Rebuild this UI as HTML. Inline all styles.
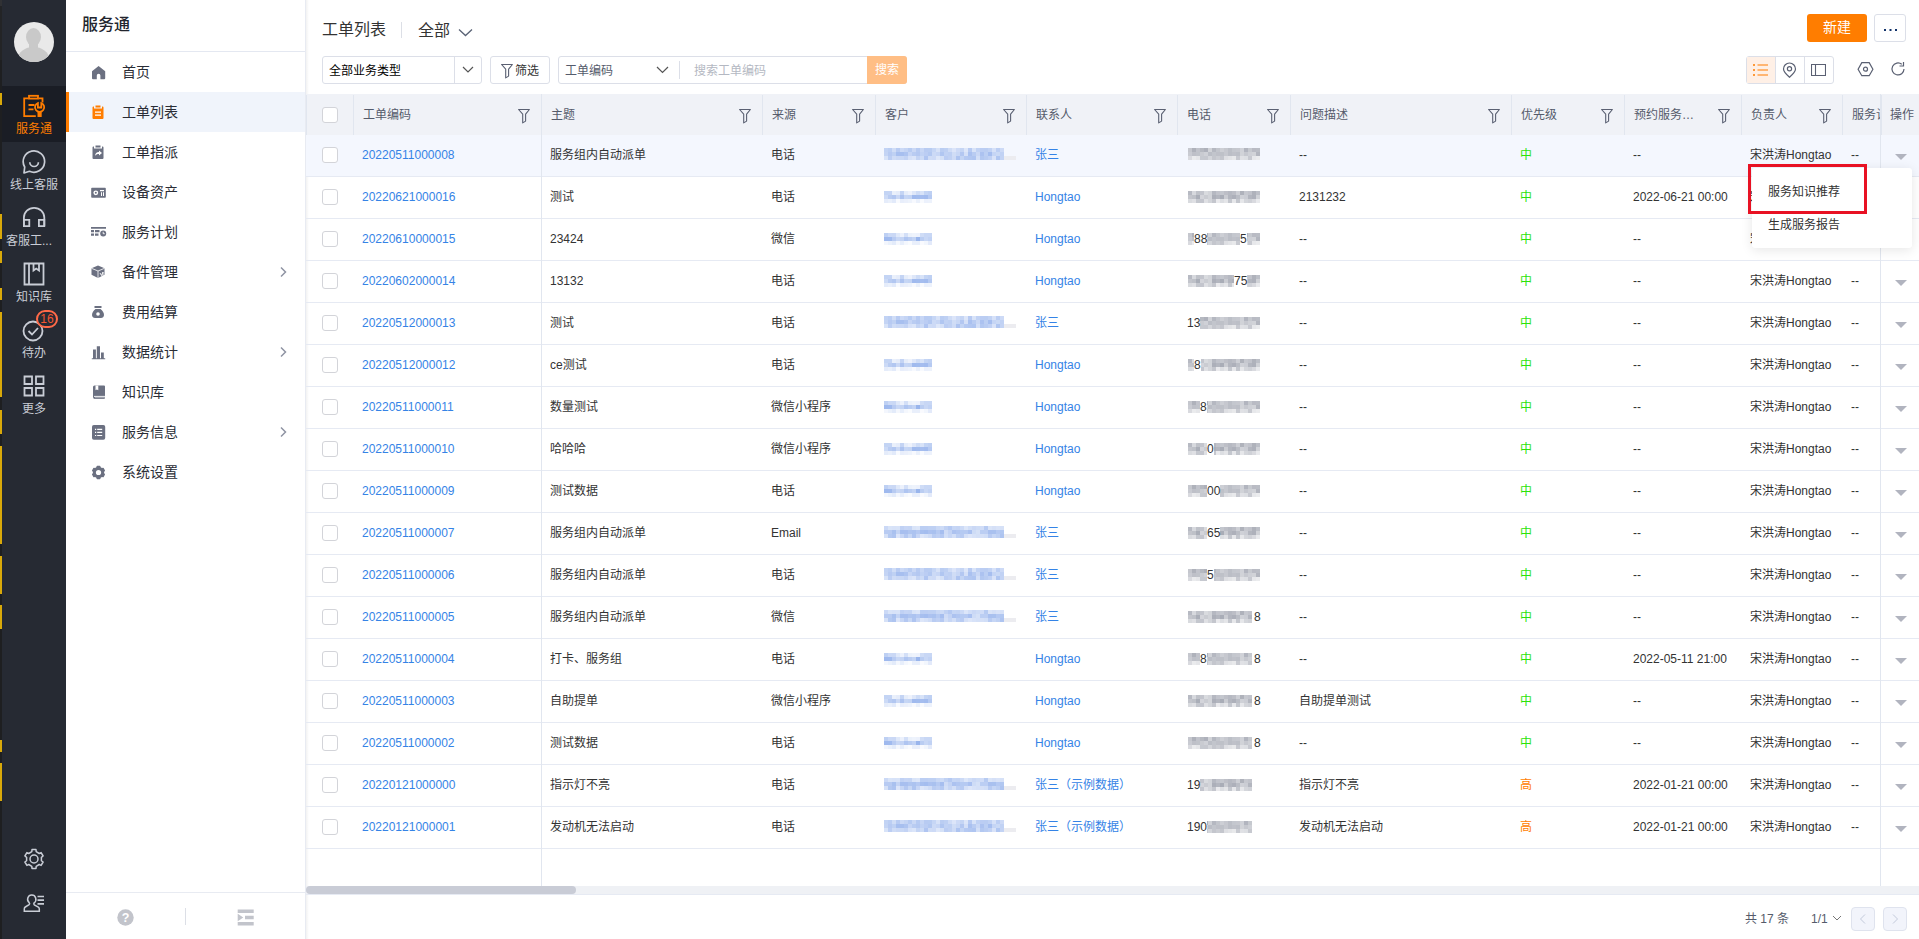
<!DOCTYPE html>
<html lang="zh-CN"><head><meta charset="utf-8"><title>工单列表</title>
<style>
*{box-sizing:border-box;margin:0;padding:0}
html,body{width:1919px;height:939px;overflow:hidden;background:#fff}
body{font-family:"Liberation Sans","Noto Sans CJK SC",sans-serif;font-size:12px;color:#333;position:relative}
.abs{position:absolute}
#strip{left:0;top:0;width:2px;height:939px;background:linear-gradient(180deg,#303134 0 6px,#232426 6px 60px,#1e1f21 60px)}
#strip i{position:absolute;left:0;width:2px;background:#d9a90a;display:block}
#nav{left:2px;top:0;width:64px;height:939px;background:#262a33}
#nav .it{position:absolute;left:0;width:64px;height:56px;text-align:center;color:#c9cdd6;font-size:12px}
#nav .it.on{background:#1a1d25;color:#ff7d00}
#nav .it span{position:absolute;left:0;width:64px;top:35px;line-height:16px;white-space:nowrap}
#nav .it svg{position:absolute;left:19px;top:7px}
#side{left:66px;top:0;width:240px;height:939px;background:#fff;border-right:1px solid #e8ebf2}
#side h1{position:absolute;left:16px;top:13px;font-size:16px;font-weight:500;color:#22252e;line-height:24px}
#side .hr{position:absolute;left:0;top:51px;width:239px;height:1px;background:#e4e8f1}
#side .mi{position:absolute;left:0;width:239px;height:40px;line-height:40px;font-size:14px;color:#2a2d36}
#side .mi.on{background:#f0f4fb;border-left:3px solid #ff7d00}
#side .mi span{position:absolute;left:56px;top:0}
#side .mi.on span{left:53px}
#side .mi svg.ic{position:absolute;left:24px;top:12px}
#side .mi.on svg.ic{left:21px}
#side .mi svg.ar{position:absolute;left:211px;top:14px}
#side .ft{position:absolute;left:0;top:892px;width:239px;height:47px;border-top:1px solid #e8ebf2}
#main{left:306px;top:0;width:1613px;height:939px;background:#fff}
.th{position:absolute;top:95px;height:40px;background:#f0f2f7;border-left:1px solid #e1e6ef;color:#555b6b;line-height:41px;padding-left:9px;white-space:nowrap;overflow:hidden}
.th .fi{position:absolute;right:10px;top:13px}
.row{position:absolute;left:306px;width:1613px;height:42px;border-bottom:1px solid #e6eaf3}
.row.hv{background:#f4f7fe}
.c{position:absolute;top:0;height:41px;line-height:41px;white-space:nowrap;overflow:hidden;color:#333}
a.l,.l{color:#3583e6;text-decoration:none}
.cb{position:absolute;width:16px;height:16px;border:1px solid #d3d4d9;border-radius:3px;background:#fff}
.vl{position:absolute;width:1px;background:#e1e6ef}
.dg{position:absolute;top:14px;height:13px;line-height:13px;background:#fff;color:#333}
.mz{position:absolute;top:13px;height:12px}.mz i{display:block;height:4px;width:100%}
.bL00{background:linear-gradient(90deg,#c2d3f4 0px 4px,#bbcef3 4px 8px,#d0ddf6 8px 12px,#b8cbf2 12px 16px,#cbd9f6 16px 20px,#c4d4f4 20px 24px,#b7cbf2 24px 28px,#cad8f5 28px 32px,#b6caf2 32px 36px,#c7d6f5 36px 40px,#b8cbf2 40px 44px,#b8ccf2 44px 48px,#c6d6f5 48px 52px,#d7e2f8 52px 56px,#bacdf2 56px 60px,#bed0f3 60px 64px,#cfdcf6 64px 68px,#dce5f9 68px 72px,#cddaf6 72px 76px,#c5d5f4 76px 80px,#dde6f9 80px 84px,#b7caf2 84px 88px,#d8e3f8 88px 92px,#c1d2f4 92px 96px,#bbcdf3 96px 100px,#bacdf2 100px 104px,#c1d2f4 104px 108px,#d6e1f8 108px 112px,#bccef3 112px 116px,#cddaf6 116px 120px)}
.bL01{background:linear-gradient(90deg,#c4d4f4 0px 4px,#b7caf2 4px 8px,#bfd1f3 8px 12px,#a7bfef 12px 16px,#a7bfef 16px 20px,#aec4f0 20px 24px,#c6d5f5 24px 28px,#b9ccf2 28px 32px,#b4c8f1 32px 36px,#c1d2f4 36px 40px,#bbcdf3 40px 44px,#b3c8f1 44px 48px,#ccdaf6 48px 52px,#c7d6f5 52px 56px,#b0c6f1 56px 60px,#c1d2f4 60px 64px,#bed0f3 64px 68px,#d0ddf6 68px 72px,#c8d7f5 72px 76px,#b3c7f1 76px 80px,#d5e0f7 80px 84px,#aac1f0 84px 88px,#b9ccf2 88px 92px,#cad8f5 92px 96px,#acc2f0 96px 100px,#bccff3 100px 104px,#a6beef 104px 108px,#c5d5f5 108px 112px,#cad9f5 112px 116px,#c1d2f4 116px 120px)}
.bL02{background:linear-gradient(90deg,#d8e3f8 0px 4px,#bccef3 4px 8px,#cfdcf6 8px 12px,#cad8f5 12px 16px,#c9d8f5 16px 20px,#c3d3f4 20px 24px,#d6e1f8 24px 28px,#dbe5f9 28px 32px,#c4d4f4 32px 36px,#cddbf6 36px 40px,#b0c5f1 40px 44px,#cfdcf6 44px 48px,#cddaf6 48px 52px,#dee7f9 52px 56px,#d5e1f7 56px 60px,#bbcdf3 60px 64px,#c0d1f3 64px 68px,#cedbf6 68px 72px,#aec4f0 72px 76px,#c3d4f4 76px 80px,#b5c9f2 80px 84px,#b2c7f1 84px 88px,#afc5f1 88px 92px,#d3dff7 92px 96px,#b3c8f1 96px 100px,#b9ccf2 100px 104px,#c0d1f4 104px 108px,#d8e2f8 108px 112px,#b0c6f1 112px 116px,#c3d3f4 116px 120px)}
.bL10{background:linear-gradient(90deg,#cbd9f6 0px 4px,#d9e4f8 4px 8px,#d7e2f8 8px 12px,#d8e3f8 12px 16px,#c0d1f4 16px 20px,#c6d5f5 20px 24px,#c4d4f4 24px 28px,#d9e4f8 28px 32px,#dce6f9 32px 36px,#bbcef3 36px 40px,#bccef3 40px 44px,#bed0f3 44px 48px,#bed0f3 48px 52px,#c9d8f5 52px 56px,#cddbf6 56px 60px,#c0d1f3 60px 64px,#b5c9f2 64px 68px,#c6d6f5 68px 72px,#c4d4f4 72px 76px,#ccdaf6 76px 80px,#dce6f9 80px 84px,#d1def7 84px 88px,#cad8f5 88px 92px,#cedcf6 92px 96px,#d1ddf7 96px 100px,#b7cbf2 100px 104px,#dae4f8 104px 108px,#d5e0f7 108px 112px,#d9e3f8 112px 116px,#d6e1f7 116px 120px)}
.bL11{background:linear-gradient(90deg,#b8cbf2 0px 4px,#b8cbf2 4px 8px,#a9c1ef 8px 12px,#c4d4f4 12px 16px,#a7bfef 16px 20px,#a8bfef 20px 24px,#afc5f0 24px 28px,#acc3f0 28px 32px,#b5c9f2 32px 36px,#a7bfef 36px 40px,#a4bdef 40px 44px,#acc2f0 44px 48px,#a9c1ef 48px 52px,#b6caf2 52px 56px,#a6beef 56px 60px,#d0dcf6 60px 64px,#c3d3f4 64px 68px,#acc2f0 68px 72px,#b1c6f1 72px 76px,#b5caf2 76px 80px,#b6caf2 80px 84px,#aac1f0 84px 88px,#cedcf6 88px 92px,#d5e1f7 92px 96px,#bbcef3 96px 100px,#bccef3 100px 104px,#a9c0ef 104px 108px,#a9c1ef 108px 112px,#b5c9f2 112px 116px,#b1c7f1 116px 120px)}
.bL12{background:linear-gradient(90deg,#d6e1f7 0px 4px,#b4c9f1 4px 8px,#aec4f0 8px 12px,#dce5f9 12px 16px,#c7d6f5 16px 20px,#b4c8f1 20px 24px,#c7d7f5 24px 28px,#aec4f0 28px 32px,#c7d6f5 32px 36px,#dde6f9 36px 40px,#d7e2f8 40px 44px,#cfdcf6 44px 48px,#b9ccf2 48px 52px,#bfd0f3 52px 56px,#b5c9f2 56px 60px,#d3dff7 60px 64px,#c7d6f5 64px 68px,#d3dff7 68px 72px,#bdcff3 72px 76px,#b8cbf2 76px 80px,#d5e0f7 80px 84px,#dde6f9 84px 88px,#d7e2f8 88px 92px,#d4e0f7 92px 96px,#d5e0f7 96px 100px,#d1def7 100px 104px,#b8cbf2 104px 108px,#c6d6f5 108px 112px,#bed0f3 112px 116px,#aec4f0 116px 120px)}
.bS00{background:linear-gradient(90deg,#bed0f3 0px 4px,#cbd9f6 4px 8px,#cad8f5 8px 12px,#dfe8f9 12px 16px,#ecf1fc 16px 20px,#d3dff7 20px 24px,#ebf1fb 24px 28px,#eef3fc 28px 32px,#ecf1fc 32px 36px,#cfdcf6 36px 40px,#c8d7f5 40px 44px,#c8d7f5 44px 48px)}
.bS01{background:linear-gradient(90deg,#9fb9ee 0px 4px,#a0baee 4px 8px,#b8cbf2 8px 12px,#c8d7f5 12px 16px,#c4d4f4 16px 20px,#afc5f1 20px 24px,#b9ccf2 24px 28px,#c2d3f4 28px 32px,#99b5ec 32px 36px,#bacdf2 36px 40px,#c8d7f5 40px 44px,#c1d2f4 44px 48px)}
.bS02{background:linear-gradient(90deg,#f3f6fd 0px 4px,#ebf1fb 4px 8px,#e3ebfa 8px 12px,#f4f7fd 12px 16px,#e7eefb 16px 20px,#f4f7fd 20px 24px,#f9fbfe 24px 28px,#e9effb 28px 32px,#e9effb 32px 36px,#f9fafe 36px 40px,#f2f6fd 40px 44px,#e3eafa 44px 48px)}
.bS10{background:linear-gradient(90deg,#c3d4f4 0px 4px,#c4d4f4 4px 8px,#eaf0fb 8px 12px,#e5ecfa 12px 16px,#c4d4f4 16px 20px,#e6edfa 20px 24px,#eef2fc 24px 28px,#dee7f9 28px 32px,#cedcf6 32px 36px,#d8e3f8 36px 40px,#c3d4f4 40px 44px,#bed0f3 44px 48px)}
.bS11{background:linear-gradient(90deg,#ccdaf6 0px 4px,#b9ccf2 4px 8px,#b2c7f1 8px 12px,#cad8f5 12px 16px,#adc3f0 16px 20px,#c6d6f5 20px 24px,#c3d4f4 24px 28px,#a0baee 28px 32px,#a2bcee 32px 36px,#a5bdef 36px 40px,#a2bbee 40px 44px,#b6caf2 44px 48px)}
.bS12{background:linear-gradient(90deg,#e5ecfa 0px 4px,#eaf0fb 4px 8px,#e2eafa 8px 12px,#f8fafe 12px 16px,#e8eefb 16px 20px,#ebf0fb 20px 24px,#eef3fc 24px 28px,#f7f9fe 28px 32px,#eaf0fb 32px 36px,#f8fafe 36px 40px,#ecf1fc 40px 44px,#edf2fc 44px 48px)}
.bG00{background:linear-gradient(90deg,#c5c7ce 0px 4px,#afb2bb 4px 8px,#c1c3cb 8px 12px,#b6b9c1 12px 16px,#aeb1bb 16px 20px,#d1d3d8 20px 24px,#b5b8c1 24px 28px,#c2c5cc 28px 32px,#cdcfd5 32px 36px,#c6c8cf 36px 40px,#bcbfc7 40px 44px,#c4c7ce 44px 48px,#c6c8cf 48px 52px,#d0d2d8 52px 56px,#b2b5bf 56px 60px,#c6c9cf 60px 64px,#b9bbc4 64px 68px,#babdc5 68px 72px)}
.bG01{background:linear-gradient(90deg,#c9cbd2 0px 4px,#bec0c8 4px 8px,#c0c3ca 8px 12px,#c9cbd1 12px 16px,#cfd1d7 16px 20px,#bbbec6 20px 24px,#c2c5cc 24px 28px,#bec0c8 28px 32px,#bec1c8 32px 36px,#c6c8cf 36px 40px,#bbbec6 40px 44px,#bfc1c9 44px 48px,#bcbfc7 48px 52px,#d1d3d8 52px 56px,#c6c8cf 56px 60px,#ced0d6 60px 64px,#d1d3d8 64px 68px,#b3b6bf 68px 72px)}
.bG02{background:linear-gradient(90deg,#d9dadf 0px 4px,#eaebed 4px 8px,#e5e6e9 8px 12px,#c6c9d0 12px 16px,#c6c8cf 16px 20px,#d4d6db 20px 24px,#c4c6cd 24px 28px,#cbcdd3 28px 32px,#c4c6cd 32px 36px,#dedfe3 36px 40px,#e3e4e7 40px 44px,#e8e9eb 44px 48px,#c7c9d0 48px 52px,#e0e1e5 52px 56px,#dddfe3 56px 60px,#c7c9d0 60px 64px,#e7e8eb 64px 68px,#ebecee 68px 72px)}
.bG10{background:linear-gradient(90deg,#b7bac3 0px 4px,#d7d9de 4px 8px,#bfc2c9 8px 12px,#c3c5cd 12px 16px,#d9dbdf 16px 20px,#d2d4d9 20px 24px,#b5b8c1 24px 28px,#c1c3cb 28px 32px,#c4c7ce 32px 36px,#bdbfc7 36px 40px,#b6b9c2 40px 44px,#bcbec6 44px 48px,#cdcfd5 48px 52px,#afb2bb 52px 56px,#c6c8cf 56px 60px,#c1c3cb 60px 64px,#afb2bb 64px 68px,#bcbfc7 68px 72px)}
.bG11{background:linear-gradient(90deg,#c3c5cc 0px 4px,#bec1c8 4px 8px,#aaaeb8 8px 12px,#d3d4da 12px 16px,#caccd2 16px 20px,#d2d4d9 20px 24px,#acafb9 24px 28px,#b3b6bf 28px 32px,#a9adb7 32px 36px,#caccd2 36px 40px,#b3b6bf 40px 44px,#adb0ba 44px 48px,#babdc5 48px 52px,#cfd1d7 52px 56px,#cbcdd4 56px 60px,#b3b6bf 60px 64px,#aeb1bb 64px 68px,#d0d2d7 68px 72px)}
.bG12{background:linear-gradient(90deg,#d9dbdf 0px 4px,#dfe0e4 4px 8px,#c4c7ce 8px 12px,#c3c5cd 12px 16px,#dfe0e4 16px 20px,#d3d5da 20px 24px,#c4c6cd 24px 28px,#eaeaed 28px 32px,#dcdee2 32px 36px,#e4e5e8 36px 40px,#c4c7ce 40px 44px,#e6e7ea 44px 48px,#c3c6cd 48px 52px,#e6e7ea 52px 56px,#d4d6db 56px 60px,#cfd1d7 60px 64px,#d9dadf 64px 68px,#e9eaed 68px 72px)}
.tri{position:absolute;left:1589px;top:19px;width:0;height:0;border-left:6px solid transparent;border-right:6px solid transparent;border-top:6px solid #b1b4bf}
</style></head><body>

<div id="strip" class="abs">
<i style="top:93px;height:12px"></i>
<i style="top:214px;height:25px"></i>
<i style="top:251px;height:12px"></i>
<i style="top:288px;height:12px"></i>
<i style="top:312px;height:85px"></i>
<i style="top:410px;height:24px"></i>
<i style="top:446px;height:98px"></i>
<i style="top:556px;height:38px"></i>
<i style="top:605px;height:24px"></i>
<i style="top:740px;height:12px"></i>
<i style="top:763px;height:38px"></i>
</div>
<div id="nav" class="abs">
<div class="abs" style="left:12px;top:22px;width:40px;height:40px;border-radius:50%;background:#e9e9e9;overflow:hidden"><div class="abs" style="left:12px;top:6px;width:15px;height:18px;border-radius:50%;background:#c9c9c9"></div><div class="abs" style="left:15px;top:20px;width:9px;height:8px;background:#c9c9c9"></div><div class="abs" style="left:4px;top:25px;width:31px;height:26px;border-radius:50% 50% 0 0/45% 45% 0 0;background:#c9c9c9"></div></div>
<div class="it on" style="top:86px"><svg width="26" height="26" viewBox="0 0 26 26" fill="none" stroke="#ff7d00" stroke-width="1.800"><path d="M7.300 5.300H3.200V23.100H14.800M17.800 5.300h3.700V9.500"/><rect x="8" y="2.800" width="9" height="2.800"/><path d="M7.500 12h6M7.500 16.300h5"/><path d="M16.900 10a4.600 4.600 0 1 0 3.400 0v4.500h-3.400z"/><path d="M18.600 19V24" stroke-width="4.200"/></svg><span>服务通</span></div>
<div class="it" style="top:142px"><svg width="26" height="26" viewBox="0 0 26 26" fill="none" stroke="#c9cdd6" stroke-width="1.700"><path d="M8.500 22.300A10.700 10.700 0 1 0 3.700 18L3 24z" stroke-linejoin="round"/><path d="M8.800 13.200a4.300 4.300 0 0 0 8.600 0"/></svg><span>线上客服</span></div>
<div class="it" style="top:198px"><svg width="26" height="26" viewBox="0 0 26 26" fill="none" stroke="#c9cdd6" stroke-width="1.800"><path d="M2.900 21V12.500a10.200 9.700 0 0 1 20.400 0V21"/><path d="M2.900 14.800h5.400v6.300H2.900zM17.900 14.800h5.400v6.300h-5.400z"/></svg><span style="text-align:left;left:4px">客服工...</span></div>
<div class="it" style="top:254px"><svg width="26" height="26" viewBox="0 0 26 26" fill="none" stroke="#c9cdd6" stroke-width="1.8"><path d="M3.500 2.500h19v21h-19z"/><path d="M8 2.500v21M12.500 2.500v7l2.700-2 2.800 2v-7"/></svg><span>知识库</span></div>
<div class="it" style="top:310px"><svg width="26" height="26" viewBox="0 0 26 26" fill="none" stroke="#c9cdd6" stroke-width="1.8"><circle cx="12" cy="14" r="9.500"/><path d="M7.500 14l3.500 3.500 6-6.500"/></svg><span>待办</span></div>
<div class="it" style="top:366px"><svg width="26" height="26" viewBox="0 0 26 26" fill="none" stroke="#c9cdd6" stroke-width="1.8"><path d="M3.500 3.500h7.500v7.500H3.500zM15 3.500h7.500v7.500H15zM3.500 15h7.500v7.500H3.500zM15 15h7.500v7.500H15z"/></svg><span>更多</span></div>
<div class="abs" style="left:34px;top:310px;width:22px;height:18px;border-radius:9px;background:#262a33;border:2px solid #ff6a48;color:#f4562f;font-size:12px;line-height:14px;text-align:center">16</div>
<svg class="abs" style="left:21px;top:848px" width="22" height="22" viewBox="0 0 22 22" fill="none" stroke="#c9cdd6" stroke-width="1.500" stroke-linejoin="round"><circle cx="11" cy="11" r="4"/><path d="M8.8 3.7L9.0 1.6L13.0 1.6L13.2 3.7L16.2 5.5L18.1 4.6L20.1 8.0L18.4 9.3L18.4 12.7L20.1 14.0L18.1 17.4L16.2 16.5L13.2 18.3L13.0 20.4L9.0 20.4L8.8 18.3L5.8 16.5L3.9 17.4L1.9 14.0L3.6 12.7L3.6 9.3L1.9 8.0L3.9 4.6L5.8 5.5z"/></svg>
<svg class="abs" style="left:21px;top:893px" width="22" height="22" viewBox="0 0 22 22" fill="none" stroke="#c9cdd6" stroke-width="1.500"><path d="M8.800 2a4 4.300 0 0 1 2.400 7.800c-.5.600-.5 1.500.1 2l4 2.300c.8.500 1 1 1 2v2.200H1.300V16c0-1 .2-1.500 1-2l3.800-2.300c.6-.5.600-1.400.1-2A4 4.300 0 0 1 8.800 2z"/><path d="M14.500 3.500H21M14.500 7.200H21M14.500 10.800H21" stroke-width="1.700"/></svg>
</div>
<div id="side" class="abs"><h1>服务通</h1><div class="hr"></div>
<div class="mi" style="top:52px"><svg class="ic" width="16" height="16" viewBox="0 0 16 16" style="overflow:visible"><path d="M8.600 1.900L15.200 7.200V14.200a1 1 0 0 1-1 1H10.400V11.600a1.800 1.800 0 0 0-3.600 0V15.200H3a1 1 0 0 1-1-1V7.200z" fill="#6b7081"/></svg><span>首页</span></div>
<div class="mi on" style="top:92px"><svg class="ic" width="16" height="16" viewBox="0 0 16 16" style="overflow:visible"><path d="M5.500 1.500h5v2h-5z M4 2.500h-.5a1 1 0 0 0-1 1V14a1 1 0 0 0 1 1h9a1 1 0 0 0 1-1V3.500a1 1 0 0 0-1-1H12v2H4z" fill="#ff7d00"/><path d="M5 7.500h6v1.200H5zM5 10.500h6v1.200H5z" fill="#fff"/></svg><span>工单列表</span></div>
<div class="mi" style="top:132px"><svg class="ic" width="16" height="16" viewBox="0 0 16 16" style="overflow:visible"><path d="M5.500 1.500h5v2h-5z M4 2.500h-.5a1 1 0 0 0-1 1V14a1 1 0 0 0 1 1h9a1 1 0 0 0 1-1V3.500a1 1 0 0 0-1-1H12v2H4z" fill="#6b7081"/><path d="M9 6.500l3 2.500-3 2.500V10c-2 0-3 .5-4 2 .3-2.500 1.500-4 4-4z" fill="#fff"/></svg><span>工单指派</span></div>
<div class="mi" style="top:172px"><svg class="ic" width="16" height="16" viewBox="0 0 16 16" style="overflow:visible"><path d="M2 3.800h13a.8.800 0 0 1 .8.800v8.400a.8.800 0 0 1-.8.800H2a.8.800 0 0 1-.8-.8V4.600a.8.800 0 0 1 .8-.8z" fill="#6b7081"/><circle cx="5.800" cy="8.800" r="2.400" fill="#fff"/><circle cx="5.800" cy="8.800" r="1" fill="#6b7081"/><path d="M10 6h4v1.200h-4zM11 8.200h1v3.800h-1zM13 8.200h1v3.800h-1z" fill="#fff"/></svg><span>设备资产</span></div>
<div class="mi" style="top:212px"><svg class="ic" width="16" height="16" viewBox="0 0 16 16" style="overflow:visible"><path d="M1 3h15v1.800H1zM1 6h3v2.200H1zM5 6h4.500v2.200H5zM1 9.500h3v2.200H1zM5 9.500h3.500v2.200H5z" fill="#6b7081"/><circle cx="13.200" cy="9.500" r="3" fill="#6b7081"/><path d="M13.200 7.800v1.900h1.500" stroke="#fff" stroke-width=".9" fill="none"/></svg><span>服务计划</span></div>
<div class="mi" style="top:252px"><svg class="ic" width="16" height="16" viewBox="0 0 16 16" style="overflow:visible"><path d="M8 1.500l6.500 2.800v6.500L8 14 1.500 10.800V4.300z" fill="#6b7081"/><path d="M8 7v7M1.500 4.300L8 7l6.500-2.700" stroke="#fff" stroke-width=".8" fill="none"/><path d="M10 9l1.500 2.500L13 8v4" stroke="#fff" stroke-width=".9" fill="none"/></svg><span>备件管理</span><svg class="ar" width="12" height="12" viewBox="0 0 12 12"><path d="M4 1.500L8.500 6 4 10.500" fill="none" stroke="#8f94a3" stroke-width="1.500"/></svg></div>
<div class="mi" style="top:292px"><svg class="ic" width="16" height="16" viewBox="0 0 16 16" style="overflow:visible"><path d="M4.500 2h7v2h-7zM5.500 5h5c2 1.500 3.500 3.800 3.500 6 0 2-1.500 3-3 3H5c-1.500 0-3-1-3-3 0-2.200 1.500-4.500 3.500-6z" fill="#6b7081"/><circle cx="8" cy="10" r="1.800" fill="#fff"/></svg><span>费用结算</span></div>
<div class="mi" style="top:332px"><svg class="ic" width="16" height="16" viewBox="0 0 16 16" style="overflow:visible"><path d="M3 5.400h2.900v8.800H3zM6.800 2.200H10v12H6.800zM11 8.600h2.800v5.600H11zM1.800 14.200h13.400v1H1.800z" fill="#6b7081"/></svg><span>数据统计</span><svg class="ar" width="12" height="12" viewBox="0 0 12 12"><path d="M4 1.500L8.500 6 4 10.500" fill="none" stroke="#8f94a3" stroke-width="1.500"/></svg></div>
<div class="mi" style="top:372px"><svg class="ic" width="16" height="16" viewBox="0 0 16 16" style="overflow:visible"><path d="M4.500 1.500H14a1 1 0 0 1 1 1V14a1 1 0 0 1-1 1H5a2 2 0 0 1-2-2V3a1.500 1.500 0 0 1 1.500-1.500z" fill="#6b7081"/><path d="M5.500 1.500h2.800v4.800L6.900 5.400 5.500 6.300z" fill="#fff"/><path d="M4 12.400h11" stroke="#fff" stroke-width=".9"/><path d="M5 13.800h10" stroke="#fff" stroke-width=".5"/></svg><span>知识库</span></div>
<div class="mi" style="top:412px"><svg class="ic" width="16" height="16" viewBox="0 0 16 16" style="overflow:visible"><rect x="2" y="1" width="13.200" height="14.800" rx="1.800" fill="#6b7081"/><path d="M5 4.700h1.200v1.200H5zM7.200 4.700h5v1.200h-5zM5 7.800h1.200V9H5zM7.200 7.800h5V9h-5zM5 10.900h1.200v1.200H5zM7.200 10.900h5v1.200h-5z" fill="#fff"/></svg><span>服务信息</span><svg class="ar" width="12" height="12" viewBox="0 0 12 12"><path d="M4 1.500L8.500 6 4 10.500" fill="none" stroke="#8f94a3" stroke-width="1.500"/></svg></div>
<div class="mi" style="top:452px"><svg class="ic" width="16" height="16" viewBox="0 0 16 16" style="overflow:visible"><path d="M7.0 3.8L7.3 2.6L9.7 2.6L10.0 3.8L11.8 4.9L13.0 4.5L14.2 6.6L13.3 7.5L13.3 9.5L14.2 10.4L13.0 12.5L11.8 12.1L10.0 13.2L9.7 14.4L7.3 14.4L7.0 13.2L5.2 12.1L4.0 12.5L2.8 10.4L3.7 9.5L3.7 7.5L2.8 6.6L4.0 4.5L5.2 4.9z" fill="#6b7081" stroke="#6b7081" stroke-width="1.600" stroke-linejoin="round"/><circle cx="8.500" cy="8.500" r="2.600" fill="#fff"/></svg><span>系统设置</span></div>
<div class="ft"><svg class="abs" style="left:51px;top:16px" width="17" height="17" viewBox="0 0 17 17"><circle cx="8.500" cy="8.500" r="8.200" fill="#c2c4cb"/><text x="8.500" y="13" text-anchor="middle" font-size="12.500" font-weight="bold" fill="#fff" font-family="Liberation Sans,sans-serif">?</text></svg><div class="abs" style="left:119px;top:15px;width:1px;height:17px;background:#dcdfe6"></div><svg class="abs" style="left:171px;top:16px" width="17" height="17" viewBox="0 0 17 17" fill="#c2c4cb"><path d="M.7.500h16v3.400H.700zM8 6.800h8.700v3.400H8zM.700 13.100h16v3.400H.700zM.700 4.800l5.600 3.700-5.600 3.700z"/></svg></div>
</div>
<div id="main" class="abs"></div>
<div class="abs" style="left:306px;top:0;width:3px;height:939px;background:linear-gradient(90deg,rgba(0,0,0,.05),rgba(0,0,0,0))"></div>
<div class="abs" style="left:322px;top:18px;font-size:16px;line-height:24px;color:#333">工单列表</div>
<div class="abs" style="left:401px;top:22px;width:1px;height:16px;background:#dcdfe6"></div>
<div class="abs" style="left:418px;top:19px;font-size:16px;line-height:24px;color:#333">全部</div>
<svg class="abs" style="left:458px;top:28px" width="15" height="10" viewBox="0 0 15 10"><path d="M1 1.500l6.500 6L14 1.500" fill="none" stroke="#596275" stroke-width="1.300"/></svg>
<div class="abs" style="left:1807px;top:14px;width:60px;height:28px;border-radius:3px;background:#ff7d00;color:#fff;font-size:14px;line-height:27px;text-align:center">新建</div>
<div class="abs" style="left:1874px;top:14px;width:32px;height:28px;border-radius:3px;border:1px solid #dcdfe8;background:#fff"><svg class="abs" style="left:8px;top:13px" width="16" height="4" viewBox="0 0 16 4" fill="#12336b"><rect x="1" y="1" width="2" height="2"/><rect x="6.500" y="1" width="2" height="2"/><rect x="12" y="1" width="2" height="2"/></svg></div>
<div class="abs" style="left:322px;top:56px;width:160px;height:28px;border:1px solid #dcdfe8;border-radius:3px;line-height:28px;padding-left:6px;color:#000">全部业务类型<div class="abs" style="left:131px;top:0;width:1px;height:26px;background:#dcdfe8"></div><svg class="abs" style="left:139px;top:9px" width="12" height="8" viewBox="0 0 12 8"><path d="M1 1l5 5 5-5" fill="none" stroke="#555" stroke-width="1.200"/></svg></div>
<div class="abs" style="left:490px;top:56px;width:60px;height:28px;border:1px solid #dcdfe8;border-radius:3px;line-height:28px;color:#333;padding-left:24px">筛选<svg class="abs" style="left:9px;top:6px" width="14" height="16" viewBox="0 0 14 16"><path d="M1.600 1.500h10.800L8.600 6.200v6.900L5.700 14.900V6.200z" fill="none" stroke="#5a6072" stroke-width="1.100" stroke-linejoin="round"/></svg></div>
<div class="abs" style="left:558px;top:56px;width:349px;height:28px;border:1px solid #dcdfe8;border-radius:3px;line-height:28px;color:#555b6b;padding-left:6px">工单编码<svg class="abs" style="left:97px;top:9px" width="13" height="8" viewBox="0 0 13 8"><path d="M1 1l5.500 5.500L12 1" fill="none" stroke="#555" stroke-width="1.200"/></svg><div class="abs" style="left:120px;top:4px;width:1px;height:18px;background:#dcdfe8"></div><span class="abs" style="left:135px;top:0;color:#b4b8c2">搜索工单编码</span><div class="abs" style="left:308px;top:-1px;width:40px;height:28px;background:#ffbe85;color:#fff;text-align:center;border-radius:0 3px 3px 0">搜索</div></div>
<div class="abs" style="left:1746px;top:56px;width:88px;height:28px;border:1px solid #dcdfe8;border-radius:3px;background:#fff"><div class="abs" style="left:0;top:0;width:29px;height:26px;background:#fff0e6;border-right:1px solid #dcdfe8"></div><div class="abs" style="left:57px;top:0;width:1px;height:26px;background:#dcdfe8"></div><svg class="abs" style="left:5px;top:5px" width="17" height="16" viewBox="0 0 17 16"><path d="M1 3h2M1 8h2M1 13h2" stroke="#ff7d00" stroke-width="1.500"/><path d="M5.500 3H16M5.500 8H16M5.500 13H16" stroke="#ff7d00" stroke-width="1.100"/></svg><svg class="abs" style="left:35px;top:5px" width="15" height="17" viewBox="0 0 15 17" fill="none" stroke="#5a6072" stroke-width="1.200"><path d="M7.500 1a6 6 0 0 1 6 6c0 2.800-3 5.600-6 8.200-3-2.600-6-5.400-6-8.200a6 6 0 0 1 6-6z"/><circle cx="7.500" cy="6.800" r="2.100"/></svg><svg class="abs" style="left:64px;top:7px" width="15" height="13" viewBox="0 0 15 13" fill="none" stroke="#5a6072" stroke-width="1.200"><path d="M.5.500h14v11H.500zM4.500.500v11" stroke-width="1.100"/></svg></div>
<svg class="abs" style="left:1857px;top:61px" width="17" height="17" viewBox="0 0 17 17" fill="none" stroke="#5a6072" stroke-width="1.200"><path d="M4.800 1.700h7.400l3.700 6.500-3.700 6.500H4.800L1.100 8.200z"/><circle cx="8.500" cy="8.200" r="2"/></svg>
<svg class="abs" style="left:1890px;top:61px" width="16" height="16" viewBox="0 0 16 16" fill="none" stroke="#5a6072" stroke-width="1.200"><path d="M14 8a6 6 0 1 1-2.200-4.700"/><path d="M13.500 1v4h-4"/></svg>
<div class="abs" style="left:306px;top:94px;width:1613px;height:41px;background:#f0f2f7"></div>
<div class="th" style="left:306px;width:47px"></div>
<div class="th" style="left:353px;width:188px">工单编码<svg class="fi" width="14" height="16" viewBox="0 0 14 16"><path d="M1.6 1.5h10.8L8.6 6.2v6.9L5.7 14.9V6.2z" fill="none" stroke="#5a6072" stroke-width="1.1" stroke-linejoin="round"/></svg></div>
<div class="th" style="left:541px;width:221px">主题<svg class="fi" width="14" height="16" viewBox="0 0 14 16"><path d="M1.6 1.5h10.8L8.6 6.2v6.9L5.7 14.9V6.2z" fill="none" stroke="#5a6072" stroke-width="1.1" stroke-linejoin="round"/></svg></div>
<div class="th" style="left:762px;width:113px">来源<svg class="fi" width="14" height="16" viewBox="0 0 14 16"><path d="M1.6 1.5h10.8L8.6 6.2v6.9L5.7 14.9V6.2z" fill="none" stroke="#5a6072" stroke-width="1.1" stroke-linejoin="round"/></svg></div>
<div class="th" style="left:875px;width:151px">客户<svg class="fi" width="14" height="16" viewBox="0 0 14 16"><path d="M1.6 1.5h10.8L8.6 6.2v6.9L5.7 14.9V6.2z" fill="none" stroke="#5a6072" stroke-width="1.1" stroke-linejoin="round"/></svg></div>
<div class="th" style="left:1026px;width:151px">联系人<svg class="fi" width="14" height="16" viewBox="0 0 14 16"><path d="M1.6 1.5h10.8L8.6 6.2v6.9L5.7 14.9V6.2z" fill="none" stroke="#5a6072" stroke-width="1.1" stroke-linejoin="round"/></svg></div>
<div class="th" style="left:1177px;width:113px">电话<svg class="fi" width="14" height="16" viewBox="0 0 14 16"><path d="M1.6 1.5h10.8L8.6 6.2v6.9L5.7 14.9V6.2z" fill="none" stroke="#5a6072" stroke-width="1.1" stroke-linejoin="round"/></svg></div>
<div class="th" style="left:1290px;width:221px">问题描述<svg class="fi" width="14" height="16" viewBox="0 0 14 16"><path d="M1.6 1.5h10.8L8.6 6.2v6.9L5.7 14.9V6.2z" fill="none" stroke="#5a6072" stroke-width="1.1" stroke-linejoin="round"/></svg></div>
<div class="th" style="left:1511px;width:113px">优先级<svg class="fi" width="14" height="16" viewBox="0 0 14 16"><path d="M1.6 1.5h10.8L8.6 6.2v6.9L5.7 14.9V6.2z" fill="none" stroke="#5a6072" stroke-width="1.1" stroke-linejoin="round"/></svg></div>
<div class="th" style="left:1624px;width:117px">预约服务…<svg class="fi" width="14" height="16" viewBox="0 0 14 16"><path d="M1.6 1.5h10.8L8.6 6.2v6.9L5.7 14.9V6.2z" fill="none" stroke="#5a6072" stroke-width="1.1" stroke-linejoin="round"/></svg></div>
<div class="th" style="left:1741px;width:101px">负责人<svg class="fi" width="14" height="16" viewBox="0 0 14 16"><path d="M1.6 1.5h10.8L8.6 6.2v6.9L5.7 14.9V6.2z" fill="none" stroke="#5a6072" stroke-width="1.1" stroke-linejoin="round"/></svg></div>
<div class="th" style="left:1842px;width:39px">服务计</div>
<div class="th" style="left:1881px;width:38px;padding-left:8px">操作</div>
<div class="cb" style="left:322px;top:107px"></div>
<div class="row hv" style="top:135px">
<div class="cb" style="left:16px;top:12px"></div>
<div class="c" style="left:56px;width:178px"><a class="l">20220511000008</a></div>
<div class="c" style="left:244px;width:211px">服务组内自动派单</div>
<div class="c" style="left:465px;width:103px">电话</div>
<div class="mz" style="left:578px;top:13px;width:120px"><i class="bL00"></i><i class="bL01"></i><i class="bL02"></i></div>
<div class="abs" style="left:698px;top:21px;width:12px;height:4px;background:#ececf0"></div>
<div class="c" style="left:729px;width:141px"><a class="l">张三</a></div>
<div class="mz" style="left:882px;top:13px;width:72px"><i class="bG00"></i><i class="bG01"></i><i class="bG02"></i></div>
<div class="c" style="left:993px;width:211px">--</div>
<div class="c" style="left:1214px;width:103px"><span style="color:#2be30a">中</span></div>
<div class="c" style="left:1327px;width:107px">--</div>
<div class="c" style="left:1444px;width:91px">宋洪涛Hongtao</div>
<div class="c" style="left:1545px;width:29px">--</div>
<div class="tri"></div>
</div>
<div class="row" style="top:177px">
<div class="cb" style="left:16px;top:12px"></div>
<div class="c" style="left:56px;width:178px"><a class="l">20220621000016</a></div>
<div class="c" style="left:244px;width:211px">测试</div>
<div class="c" style="left:465px;width:103px">电话</div>
<div class="mz" style="left:578px;top:14px;width:48px"><i class="bS10"></i><i class="bS11"></i><i class="bS12"></i></div>
<div class="c" style="left:729px;width:141px"><a class="l">Hongtao</a></div>
<div class="mz" style="left:882px;top:14px;width:72px"><i class="bG10"></i><i class="bG11"></i><i class="bG12"></i></div>
<div class="c" style="left:993px;width:211px">2131232</div>
<div class="c" style="left:1214px;width:103px"><span style="color:#2be30a">中</span></div>
<div class="c" style="left:1327px;width:107px">2022-06-21 00:00</div>
<div class="c" style="left:1444px;width:91px">宋洪涛Hongtao</div>
<div class="c" style="left:1545px;width:29px">--</div>
<div class="tri"></div>
</div>
<div class="row" style="top:219px">
<div class="cb" style="left:16px;top:12px"></div>
<div class="c" style="left:56px;width:178px"><a class="l">20220610000015</a></div>
<div class="c" style="left:244px;width:211px">23424</div>
<div class="c" style="left:465px;width:103px">微信</div>
<div class="mz" style="left:578px;top:14px;width:48px"><i class="bS00"></i><i class="bS01"></i><i class="bS02"></i></div>
<div class="c" style="left:729px;width:141px"><a class="l">Hongtao</a></div>
<div class="mz" style="left:882px;top:14px;width:72px"><i class="bG00"></i><i class="bG01"></i><i class="bG02"></i></div>
<span class="dg" style="left:888px">88</span>
<span class="dg" style="left:934px">5</span>
<div class="c" style="left:993px;width:211px">--</div>
<div class="c" style="left:1214px;width:103px"><span style="color:#2be30a">中</span></div>
<div class="c" style="left:1327px;width:107px">--</div>
<div class="c" style="left:1444px;width:91px">宋洪涛Hongtao</div>
<div class="c" style="left:1545px;width:29px">--</div>
<div class="tri"></div>
</div>
<div class="row" style="top:261px">
<div class="cb" style="left:16px;top:12px"></div>
<div class="c" style="left:56px;width:178px"><a class="l">20220602000014</a></div>
<div class="c" style="left:244px;width:211px">13132</div>
<div class="c" style="left:465px;width:103px">电话</div>
<div class="mz" style="left:578px;top:14px;width:48px"><i class="bS10"></i><i class="bS11"></i><i class="bS12"></i></div>
<div class="c" style="left:729px;width:141px"><a class="l">Hongtao</a></div>
<div class="mz" style="left:882px;top:14px;width:72px"><i class="bG10"></i><i class="bG11"></i><i class="bG12"></i></div>
<span class="dg" style="left:928px">75</span>
<div class="c" style="left:993px;width:211px">--</div>
<div class="c" style="left:1214px;width:103px"><span style="color:#2be30a">中</span></div>
<div class="c" style="left:1327px;width:107px">--</div>
<div class="c" style="left:1444px;width:91px">宋洪涛Hongtao</div>
<div class="c" style="left:1545px;width:29px">--</div>
<div class="tri"></div>
</div>
<div class="row" style="top:303px">
<div class="cb" style="left:16px;top:12px"></div>
<div class="c" style="left:56px;width:178px"><a class="l">20220512000013</a></div>
<div class="c" style="left:244px;width:211px">测试</div>
<div class="c" style="left:465px;width:103px">电话</div>
<div class="mz" style="left:578px;top:13px;width:120px"><i class="bL00"></i><i class="bL01"></i><i class="bL02"></i></div>
<div class="abs" style="left:698px;top:21px;width:12px;height:4px;background:#ececf0"></div>
<div class="c" style="left:729px;width:141px"><a class="l">张三</a></div>
<div class="mz" style="left:882px;top:14px;width:72px"><i class="bG00"></i><i class="bG01"></i><i class="bG02"></i></div>
<span class="dg" style="left:881px">13</span>
<div class="c" style="left:993px;width:211px">--</div>
<div class="c" style="left:1214px;width:103px"><span style="color:#2be30a">中</span></div>
<div class="c" style="left:1327px;width:107px">--</div>
<div class="c" style="left:1444px;width:91px">宋洪涛Hongtao</div>
<div class="c" style="left:1545px;width:29px">--</div>
<div class="tri"></div>
</div>
<div class="row" style="top:345px">
<div class="cb" style="left:16px;top:12px"></div>
<div class="c" style="left:56px;width:178px"><a class="l">20220512000012</a></div>
<div class="c" style="left:244px;width:211px">ce测试</div>
<div class="c" style="left:465px;width:103px">电话</div>
<div class="mz" style="left:578px;top:14px;width:48px"><i class="bS10"></i><i class="bS11"></i><i class="bS12"></i></div>
<div class="c" style="left:729px;width:141px"><a class="l">Hongtao</a></div>
<div class="mz" style="left:882px;top:14px;width:72px"><i class="bG10"></i><i class="bG11"></i><i class="bG12"></i></div>
<span class="dg" style="left:888px">8</span>
<div class="c" style="left:993px;width:211px">--</div>
<div class="c" style="left:1214px;width:103px"><span style="color:#2be30a">中</span></div>
<div class="c" style="left:1327px;width:107px">--</div>
<div class="c" style="left:1444px;width:91px">宋洪涛Hongtao</div>
<div class="c" style="left:1545px;width:29px">--</div>
<div class="tri"></div>
</div>
<div class="row" style="top:387px">
<div class="cb" style="left:16px;top:12px"></div>
<div class="c" style="left:56px;width:178px"><a class="l">20220511000011</a></div>
<div class="c" style="left:244px;width:211px">数量测试</div>
<div class="c" style="left:465px;width:103px">微信小程序</div>
<div class="mz" style="left:578px;top:14px;width:48px"><i class="bS00"></i><i class="bS01"></i><i class="bS02"></i></div>
<div class="c" style="left:729px;width:141px"><a class="l">Hongtao</a></div>
<div class="mz" style="left:882px;top:14px;width:72px"><i class="bG00"></i><i class="bG01"></i><i class="bG02"></i></div>
<span class="dg" style="left:894px">8</span>
<div class="c" style="left:993px;width:211px">--</div>
<div class="c" style="left:1214px;width:103px"><span style="color:#2be30a">中</span></div>
<div class="c" style="left:1327px;width:107px">--</div>
<div class="c" style="left:1444px;width:91px">宋洪涛Hongtao</div>
<div class="c" style="left:1545px;width:29px">--</div>
<div class="tri"></div>
</div>
<div class="row" style="top:429px">
<div class="cb" style="left:16px;top:12px"></div>
<div class="c" style="left:56px;width:178px"><a class="l">20220511000010</a></div>
<div class="c" style="left:244px;width:211px">哈哈哈</div>
<div class="c" style="left:465px;width:103px">微信小程序</div>
<div class="mz" style="left:578px;top:14px;width:48px"><i class="bS10"></i><i class="bS11"></i><i class="bS12"></i></div>
<div class="c" style="left:729px;width:141px"><a class="l">Hongtao</a></div>
<div class="mz" style="left:882px;top:14px;width:72px"><i class="bG10"></i><i class="bG11"></i><i class="bG12"></i></div>
<span class="dg" style="left:901px">0</span>
<div class="c" style="left:993px;width:211px">--</div>
<div class="c" style="left:1214px;width:103px"><span style="color:#2be30a">中</span></div>
<div class="c" style="left:1327px;width:107px">--</div>
<div class="c" style="left:1444px;width:91px">宋洪涛Hongtao</div>
<div class="c" style="left:1545px;width:29px">--</div>
<div class="tri"></div>
</div>
<div class="row" style="top:471px">
<div class="cb" style="left:16px;top:12px"></div>
<div class="c" style="left:56px;width:178px"><a class="l">20220511000009</a></div>
<div class="c" style="left:244px;width:211px">测试数据</div>
<div class="c" style="left:465px;width:103px">电话</div>
<div class="mz" style="left:578px;top:14px;width:48px"><i class="bS00"></i><i class="bS01"></i><i class="bS02"></i></div>
<div class="c" style="left:729px;width:141px"><a class="l">Hongtao</a></div>
<div class="mz" style="left:882px;top:14px;width:72px"><i class="bG00"></i><i class="bG01"></i><i class="bG02"></i></div>
<span class="dg" style="left:901px">00</span>
<div class="c" style="left:993px;width:211px">--</div>
<div class="c" style="left:1214px;width:103px"><span style="color:#2be30a">中</span></div>
<div class="c" style="left:1327px;width:107px">--</div>
<div class="c" style="left:1444px;width:91px">宋洪涛Hongtao</div>
<div class="c" style="left:1545px;width:29px">--</div>
<div class="tri"></div>
</div>
<div class="row" style="top:513px">
<div class="cb" style="left:16px;top:12px"></div>
<div class="c" style="left:56px;width:178px"><a class="l">20220511000007</a></div>
<div class="c" style="left:244px;width:211px">服务组内自动派单</div>
<div class="c" style="left:465px;width:103px">Email</div>
<div class="mz" style="left:578px;top:13px;width:120px"><i class="bL10"></i><i class="bL11"></i><i class="bL12"></i></div>
<div class="abs" style="left:698px;top:21px;width:12px;height:4px;background:#ececf0"></div>
<div class="c" style="left:729px;width:141px"><a class="l">张三</a></div>
<div class="mz" style="left:882px;top:14px;width:72px"><i class="bG10"></i><i class="bG11"></i><i class="bG12"></i></div>
<span class="dg" style="left:901px">65</span>
<div class="c" style="left:993px;width:211px">--</div>
<div class="c" style="left:1214px;width:103px"><span style="color:#2be30a">中</span></div>
<div class="c" style="left:1327px;width:107px">--</div>
<div class="c" style="left:1444px;width:91px">宋洪涛Hongtao</div>
<div class="c" style="left:1545px;width:29px">--</div>
<div class="tri"></div>
</div>
<div class="row" style="top:555px">
<div class="cb" style="left:16px;top:12px"></div>
<div class="c" style="left:56px;width:178px"><a class="l">20220511000006</a></div>
<div class="c" style="left:244px;width:211px">服务组内自动派单</div>
<div class="c" style="left:465px;width:103px">电话</div>
<div class="mz" style="left:578px;top:13px;width:120px"><i class="bL00"></i><i class="bL01"></i><i class="bL02"></i></div>
<div class="abs" style="left:698px;top:21px;width:12px;height:4px;background:#ececf0"></div>
<div class="c" style="left:729px;width:141px"><a class="l">张三</a></div>
<div class="mz" style="left:882px;top:14px;width:72px"><i class="bG00"></i><i class="bG01"></i><i class="bG02"></i></div>
<span class="dg" style="left:901px">5</span>
<div class="c" style="left:993px;width:211px">--</div>
<div class="c" style="left:1214px;width:103px"><span style="color:#2be30a">中</span></div>
<div class="c" style="left:1327px;width:107px">--</div>
<div class="c" style="left:1444px;width:91px">宋洪涛Hongtao</div>
<div class="c" style="left:1545px;width:29px">--</div>
<div class="tri"></div>
</div>
<div class="row" style="top:597px">
<div class="cb" style="left:16px;top:12px"></div>
<div class="c" style="left:56px;width:178px"><a class="l">20220511000005</a></div>
<div class="c" style="left:244px;width:211px">服务组内自动派单</div>
<div class="c" style="left:465px;width:103px">微信</div>
<div class="mz" style="left:578px;top:13px;width:120px"><i class="bL10"></i><i class="bL11"></i><i class="bL12"></i></div>
<div class="abs" style="left:698px;top:21px;width:12px;height:4px;background:#ececf0"></div>
<div class="c" style="left:729px;width:141px"><a class="l">张三</a></div>
<div class="mz" style="left:882px;top:14px;width:64px"><i class="bG10"></i><i class="bG11"></i><i class="bG12"></i></div>
<span class="dg" style="left:948px">8</span>
<div class="c" style="left:993px;width:211px">--</div>
<div class="c" style="left:1214px;width:103px"><span style="color:#2be30a">中</span></div>
<div class="c" style="left:1327px;width:107px">--</div>
<div class="c" style="left:1444px;width:91px">宋洪涛Hongtao</div>
<div class="c" style="left:1545px;width:29px">--</div>
<div class="tri"></div>
</div>
<div class="row" style="top:639px">
<div class="cb" style="left:16px;top:12px"></div>
<div class="c" style="left:56px;width:178px"><a class="l">20220511000004</a></div>
<div class="c" style="left:244px;width:211px">打卡、服务组</div>
<div class="c" style="left:465px;width:103px">电话</div>
<div class="mz" style="left:578px;top:14px;width:48px"><i class="bS00"></i><i class="bS01"></i><i class="bS02"></i></div>
<div class="c" style="left:729px;width:141px"><a class="l">Hongtao</a></div>
<div class="mz" style="left:882px;top:14px;width:64px"><i class="bG00"></i><i class="bG01"></i><i class="bG02"></i></div>
<span class="dg" style="left:894px">8</span>
<span class="dg" style="left:948px">8</span>
<div class="c" style="left:993px;width:211px">--</div>
<div class="c" style="left:1214px;width:103px"><span style="color:#2be30a">中</span></div>
<div class="c" style="left:1327px;width:107px">2022-05-11 21:00</div>
<div class="c" style="left:1444px;width:91px">宋洪涛Hongtao</div>
<div class="c" style="left:1545px;width:29px">--</div>
<div class="tri"></div>
</div>
<div class="row" style="top:681px">
<div class="cb" style="left:16px;top:12px"></div>
<div class="c" style="left:56px;width:178px"><a class="l">20220511000003</a></div>
<div class="c" style="left:244px;width:211px">自助提单</div>
<div class="c" style="left:465px;width:103px">微信小程序</div>
<div class="mz" style="left:578px;top:14px;width:48px"><i class="bS10"></i><i class="bS11"></i><i class="bS12"></i></div>
<div class="c" style="left:729px;width:141px"><a class="l">Hongtao</a></div>
<div class="mz" style="left:882px;top:14px;width:64px"><i class="bG10"></i><i class="bG11"></i><i class="bG12"></i></div>
<span class="dg" style="left:948px">8</span>
<div class="c" style="left:993px;width:211px">自助提单测试</div>
<div class="c" style="left:1214px;width:103px"><span style="color:#2be30a">中</span></div>
<div class="c" style="left:1327px;width:107px">--</div>
<div class="c" style="left:1444px;width:91px">宋洪涛Hongtao</div>
<div class="c" style="left:1545px;width:29px">--</div>
<div class="tri"></div>
</div>
<div class="row" style="top:723px">
<div class="cb" style="left:16px;top:12px"></div>
<div class="c" style="left:56px;width:178px"><a class="l">20220511000002</a></div>
<div class="c" style="left:244px;width:211px">测试数据</div>
<div class="c" style="left:465px;width:103px">电话</div>
<div class="mz" style="left:578px;top:14px;width:48px"><i class="bS00"></i><i class="bS01"></i><i class="bS02"></i></div>
<div class="c" style="left:729px;width:141px"><a class="l">Hongtao</a></div>
<div class="mz" style="left:882px;top:14px;width:64px"><i class="bG00"></i><i class="bG01"></i><i class="bG02"></i></div>
<span class="dg" style="left:948px">8</span>
<div class="c" style="left:993px;width:211px">--</div>
<div class="c" style="left:1214px;width:103px"><span style="color:#2be30a">中</span></div>
<div class="c" style="left:1327px;width:107px">--</div>
<div class="c" style="left:1444px;width:91px">宋洪涛Hongtao</div>
<div class="c" style="left:1545px;width:29px">--</div>
<div class="tri"></div>
</div>
<div class="row" style="top:765px">
<div class="cb" style="left:16px;top:12px"></div>
<div class="c" style="left:56px;width:178px"><a class="l">20220121000000</a></div>
<div class="c" style="left:244px;width:211px">指示灯不亮</div>
<div class="c" style="left:465px;width:103px">电话</div>
<div class="mz" style="left:578px;top:13px;width:120px"><i class="bL10"></i><i class="bL11"></i><i class="bL12"></i></div>
<div class="abs" style="left:698px;top:21px;width:12px;height:4px;background:#ececf0"></div>
<div class="c" style="left:729px;width:141px"><a class="l">张三（示例数据）</a></div>
<div class="mz" style="left:882px;top:14px;width:64px"><i class="bG10"></i><i class="bG11"></i><i class="bG12"></i></div>
<span class="dg" style="left:881px">19</span>
<div class="c" style="left:993px;width:211px">指示灯不亮</div>
<div class="c" style="left:1214px;width:103px"><span style="color:#ff7d00">高</span></div>
<div class="c" style="left:1327px;width:107px">2022-01-21 00:00</div>
<div class="c" style="left:1444px;width:91px">宋洪涛Hongtao</div>
<div class="c" style="left:1545px;width:29px">--</div>
<div class="tri"></div>
</div>
<div class="row" style="top:807px">
<div class="cb" style="left:16px;top:12px"></div>
<div class="c" style="left:56px;width:178px"><a class="l">20220121000001</a></div>
<div class="c" style="left:244px;width:211px">发动机无法启动</div>
<div class="c" style="left:465px;width:103px">电话</div>
<div class="mz" style="left:578px;top:13px;width:120px"><i class="bL00"></i><i class="bL01"></i><i class="bL02"></i></div>
<div class="abs" style="left:698px;top:21px;width:12px;height:4px;background:#ececf0"></div>
<div class="c" style="left:729px;width:141px"><a class="l">张三（示例数据）</a></div>
<div class="mz" style="left:882px;top:14px;width:64px"><i class="bG00"></i><i class="bG01"></i><i class="bG02"></i></div>
<span class="dg" style="left:881px">190</span>
<div class="c" style="left:993px;width:211px">发动机无法启动</div>
<div class="c" style="left:1214px;width:103px"><span style="color:#ff7d00">高</span></div>
<div class="c" style="left:1327px;width:107px">2022-01-21 00:00</div>
<div class="c" style="left:1444px;width:91px">宋洪涛Hongtao</div>
<div class="c" style="left:1545px;width:29px">--</div>
<div class="tri"></div>
</div>
<div class="vl" style="left:541px;top:94px;height:792px"></div>
<div class="vl" style="left:1880px;top:94px;height:792px"></div>
<div class="abs" style="left:306px;top:886px;width:1613px;height:8px;background:#eff1f5"></div>
<div class="abs" style="left:306px;top:886px;width:270px;height:8px;background:#c9ccd6;border-radius:4px"></div>
<div class="abs" style="left:306px;top:894px;width:1613px;height:1px;background:#e6eaf3"></div>
<div class="abs" style="left:1745px;top:910px;line-height:18px;color:#555b6b;font-size:12px">共 17 条</div>
<div class="abs" style="left:1811px;top:910px;line-height:18px;color:#555b6b;font-size:12px">1/1</div>
<svg class="abs" style="left:1832px;top:915px" width="10" height="7" viewBox="0 0 10 7"><path d="M1 1l4 4 4-4" fill="none" stroke="#777" stroke-width="1"/></svg>
<div class="abs" style="left:1851px;top:907px;width:24px;height:24px;border:1px solid #dfe3ee;border-radius:4px;background:#f2f4fb"><svg class="abs" style="left:6px;top:5px" width="10" height="12" viewBox="0 0 10 12"><path d="M7 1.500L2.500 6 7 10.500" fill="none" stroke="#c3cadb" stroke-width="1"/></svg></div>
<div class="abs" style="left:1883px;top:907px;width:24px;height:24px;border:1px solid #dfe3ee;border-radius:4px;background:#f2f4fb"><svg class="abs" style="left:6px;top:5px" width="10" height="12" viewBox="0 0 10 12"><path d="M3 1.500L7.500 6 3 10.500" fill="none" stroke="#c3cadb" stroke-width="1"/></svg></div>
<div class="abs" style="left:1752px;top:168px;width:160px;height:80px;background:#fff;border-radius:3px;box-shadow:0 2px 12px rgba(0,0,0,.10)"><div class="abs" style="left:16px;top:15px;line-height:18px;color:#333">服务知识推荐</div><div class="abs" style="left:16px;top:48px;line-height:18px;color:#333">生成服务报告</div></div>
<div class="abs" style="left:1748px;top:164px;width:119px;height:50px;border:3px solid #e81123"></div>
</body></html>
